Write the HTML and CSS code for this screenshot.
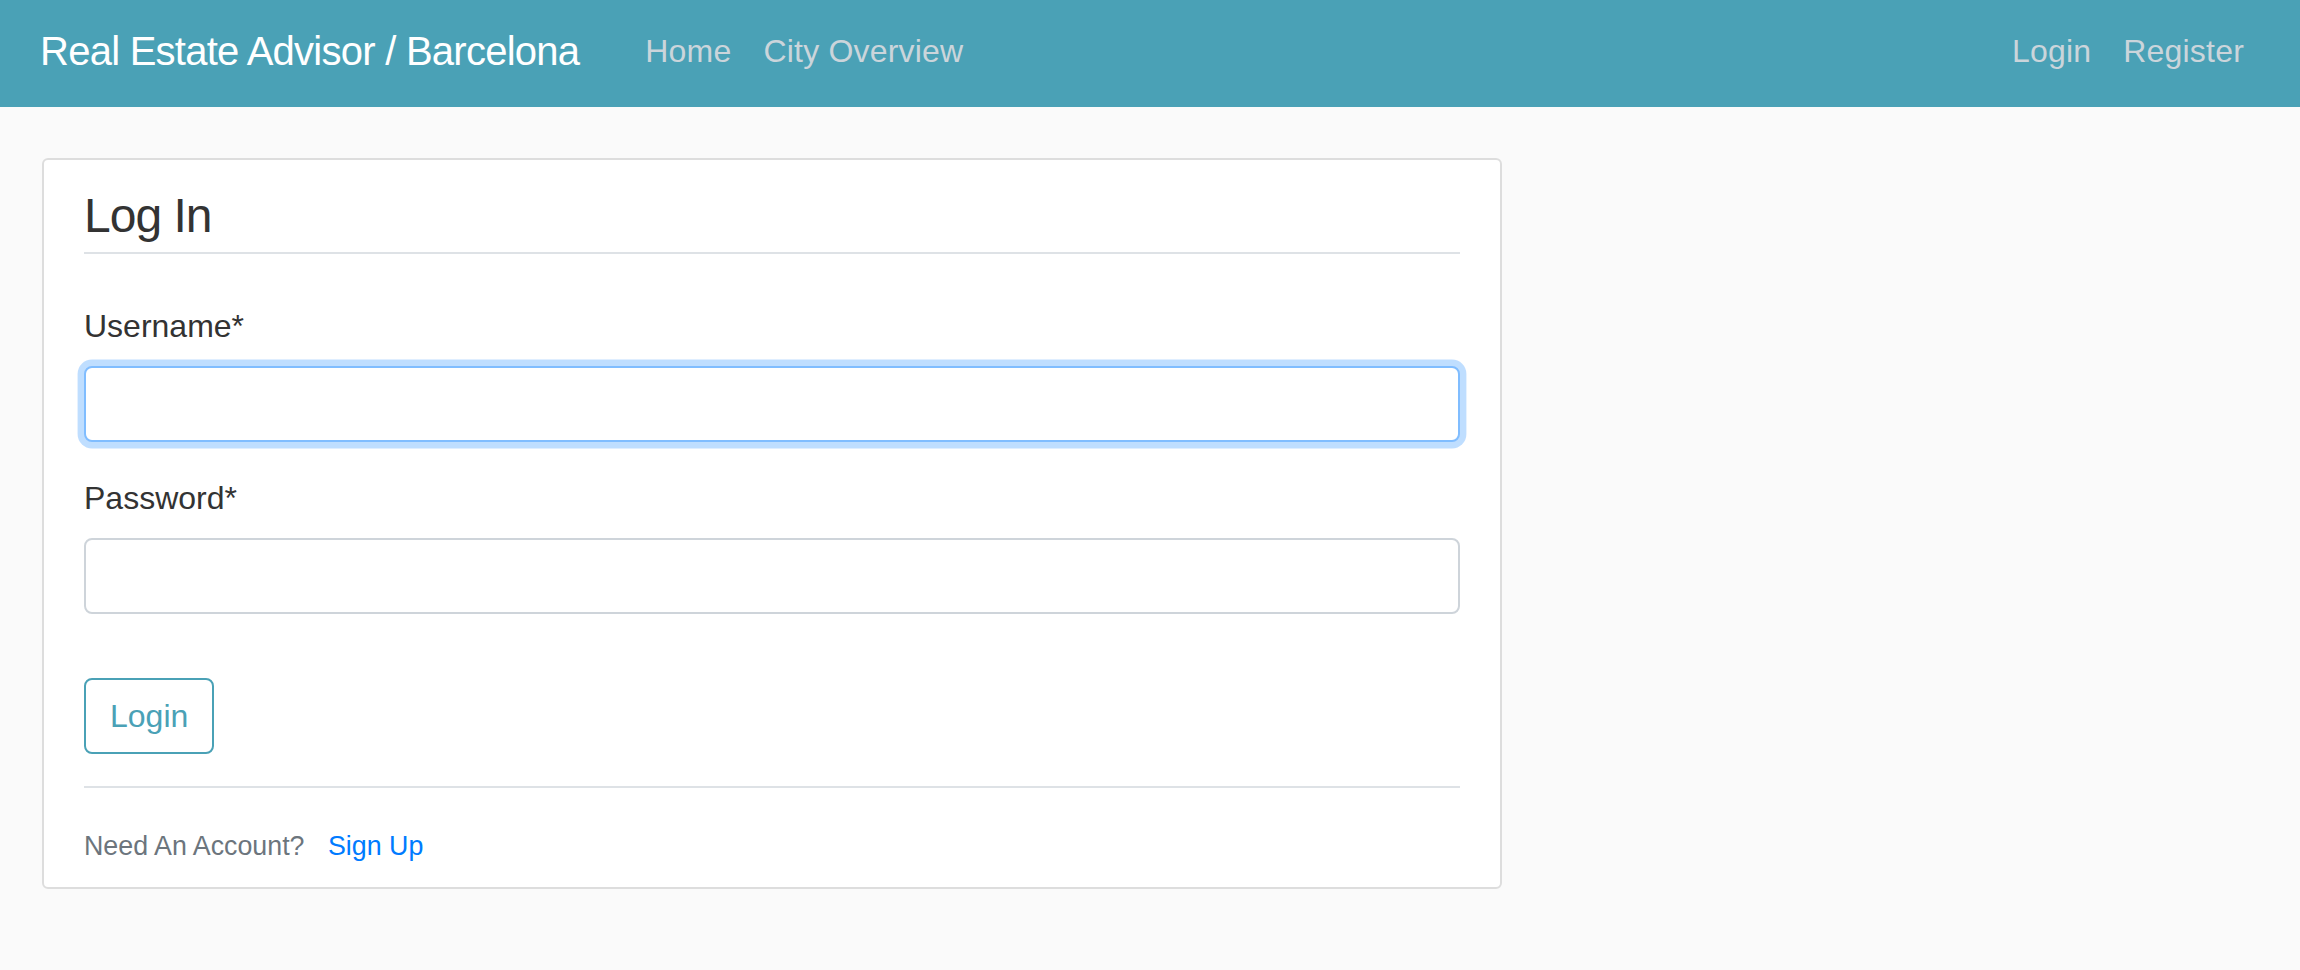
FILE: index.html
```html
<!DOCTYPE html>
<html lang="en">
<head>
<meta charset="utf-8">
<title>Log In - Real Estate Advisor</title>
<link rel="stylesheet" href="styles.css">
</head>
<body>
<header class="site-header">
  <nav class="navbar">
    <a class="brand" href="#">Real Estate Advisor / Barcelona</a>
    <div class="nav-left">
      <a class="nav-link" href="#">Home</a>
      <a class="nav-link" href="#">City Overview</a>
    </div>
    <div class="nav-right">
      <a class="nav-link" href="#">Login</a>
      <a class="nav-link" href="#">Register</a>
    </div>
  </nav>
</header>
<main class="main">
  <div class="content-section">
    <form class="login-form" action="#" method="post">
      <fieldset class="fieldset">
        <legend class="legend">Log In</legend>
        <div class="form-group">
          <label class="label" for="username">Username*</label>
          <input class="form-control focused" id="username" name="username" type="text">
        </div>
        <div class="form-group">
          <label class="label" for="password">Password*</label>
          <input class="form-control" id="password" name="password" type="password">
        </div>
      </fieldset>
      <div class="form-group">
        <button class="btn-outline" type="button">Login</button>
      </div>
    </form>
    <div class="footer-row">
      <small class="muted">Need An Account? <a class="signup" href="#">Sign Up</a></small>
    </div>
  </div>
</main>
</body>
</html>
```
FILE: styles.css
```css
* { box-sizing: border-box; }

html, body {
  margin: 0;
  padding: 0;
}

body {
  background: #fafafa;
  color: #333333;
  font-family: "Liberation Sans", Arial, sans-serif;
  font-size: 32px;
  line-height: 1.5;
}

a { text-decoration: none; }

.site-header {
  background-color: #4aa1b6;
}

.navbar {
  height: 107px;
  display: flex;
  align-items: center;
  padding: 0 40px;
}

.brand {
  color: #ffffff;
  font-size: 40px;
  line-height: 60px;
  letter-spacing: -0.75px;
  padding-bottom: 6px;
  margin-right: 50px;
  white-space: nowrap;
}

.nav-left, .nav-right {
  display: flex;
  align-items: center;
}

.nav-right {
  margin-left: auto;
}

.nav-link {
  color: #cbd5db;
  font-size: 32px;
  line-height: 48px;
  letter-spacing: 0.2px;
  padding: 0 16px 5px 16px;
  white-space: nowrap;
}

.main {
  padding: 51px 0 0 42px;
}

.content-section {
  width: 1460px;
  background: #ffffff;
  padding: 20px 40px 17px 40px;
  border: 2px solid #dddddd;
  border-radius: 6px;
}

.fieldset {
  border: 0;
  margin: 0 0 32px 0;
  padding: 0;
  min-width: 0;
}

.legend {
  display: block;
  width: 100%;
  padding: 0;
  font-size: 48px;
  line-height: 72px;
  letter-spacing: -1px;
  color: #333333;
  border-bottom: 2px solid #dee2e6;
  margin-bottom: 48px;
}

.form-group {
  margin-bottom: 32px;
}

.label {
  display: block;
  margin-bottom: 16px;
  font-size: 32px;
  line-height: 48px;
  color: #333333;
}

.form-control {
  display: block;
  width: 100%;
  height: 76px;
  padding: 12px 24px;
  font-family: inherit;
  font-size: 32px;
  line-height: 48px;
  color: #495057;
  background: #ffffff;
  border: 2px solid #ced4da;
  border-radius: 8px;
  outline: none;
}

.form-control.focused {
  border-color: #80bdff;
  box-shadow: 0 0 0 6.4px rgba(0, 123, 255, 0.25);
}

.btn-outline {
  display: inline-block;
  height: 76px;
  padding: 12px 24px;
  font-family: inherit;
  font-size: 32px;
  line-height: 48px;
  color: #4aa1b6;
  background: transparent;
  border: 2px solid #4aa1b6;
  border-radius: 8px;
  cursor: pointer;
}

.footer-row {
  border-top: 2px solid #dee2e6;
  padding-top: 32px;
  line-height: 48px;
}

.muted {
  font-size: 26.8px;
  color: #6c757d;
}

.signup {
  color: #007bff;
  margin-left: 16px;
}
```
